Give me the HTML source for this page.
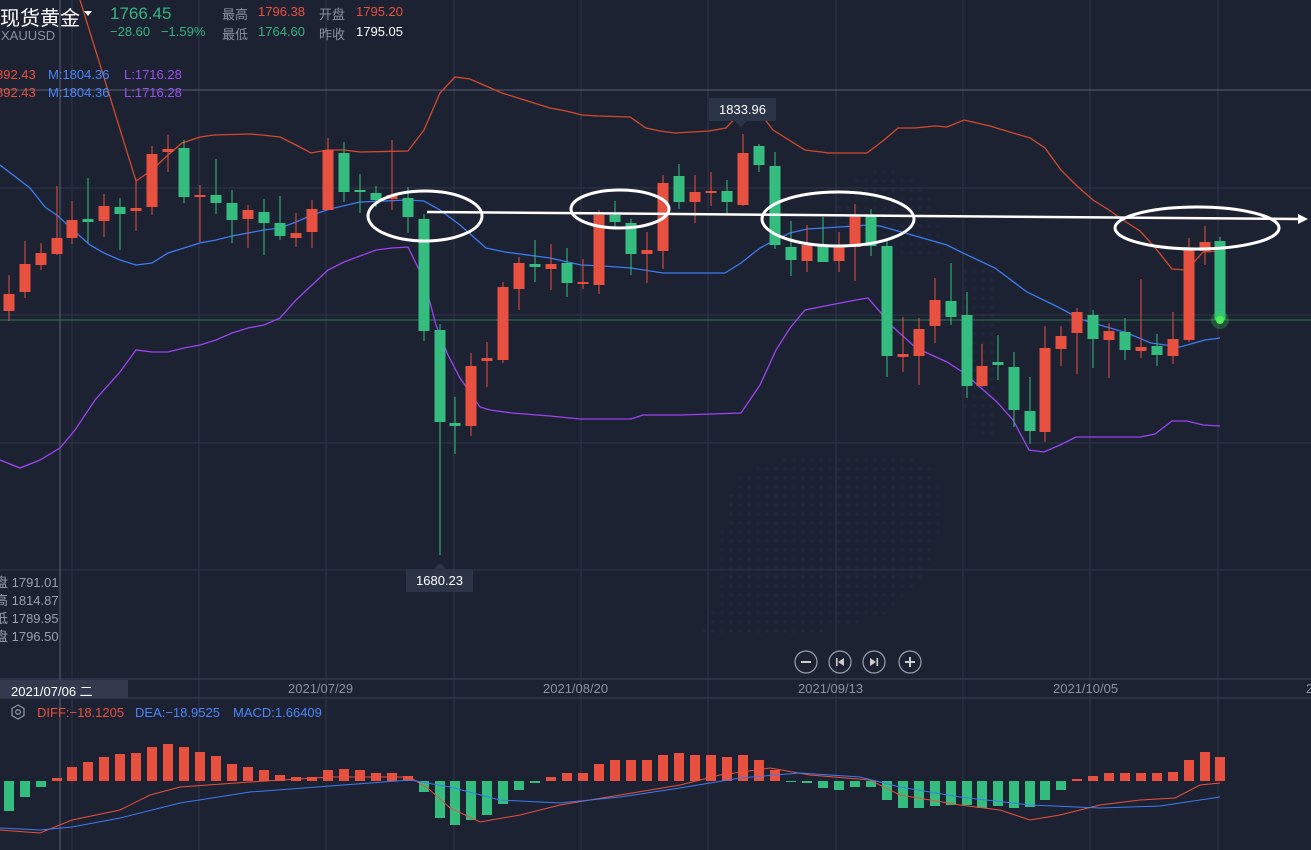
<!DOCTYPE html>
<html><head><meta charset="utf-8"><style>
html,body{margin:0;padding:0;background:#1d2233;width:1311px;height:850px;overflow:hidden;font-family:"Liberation Sans","Noto Sans CJK SC",sans-serif}
svg{position:absolute;left:0;top:0}
.t{position:absolute;white-space:nowrap;font-size:13px}
</style></head><body>
<svg id="s" width="1311" height="850" viewBox="0 0 1311 850"></svg>
<div class="t" style="left:0;top:2px;font-size:20px;color:#fff">现货黄金</div>
<div class="t" style="left:84px;top:11px;width:0;height:0;border-left:4px solid transparent;border-right:4px solid transparent;border-top:5px solid #fff"></div>
<div class="t" style="left:1px;top:28px;color:#8b919e">XAUUSD</div>
<div class="t" style="left:110px;top:4px;font-size:17px;color:#36b37e">1766.45</div>
<div class="t" style="left:110px;top:24px;color:#36b37e">−28.60&nbsp;&nbsp;&nbsp;−1.59%</div>
<div class="t" style="left:222px;top:4px;color:#8b919e">最高</div>
<div class="t" style="left:258px;top:4px;color:#e8503f">1796.38</div>
<div class="t" style="left:319px;top:4px;color:#8b919e">开盘</div>
<div class="t" style="left:356px;top:4px;color:#e8503f">1795.20</div>
<div class="t" style="left:222px;top:24px;color:#8b919e">最低</div>
<div class="t" style="left:258px;top:24px;color:#36b37e">1764.60</div>
<div class="t" style="left:319px;top:24px;color:#8b919e">昨收</div>
<div class="t" style="left:356px;top:24px;color:#fff">1795.05</div>
<div class="t" style="left:-4px;top:67px;color:#e8503f">892.43</div>
<div class="t" style="left:48px;top:67px;color:#4a86f7">M:1804.36</div>
<div class="t" style="left:124px;top:67px;color:#9b4ff2">L:1716.28</div>
<div class="t" style="left:-4px;top:85px;color:#e8503f">892.43</div>
<div class="t" style="left:48px;top:85px;color:#4a86f7">M:1804.36</div>
<div class="t" style="left:124px;top:85px;color:#9b4ff2">L:1716.28</div>
<div class="t" style="left:-5px;top:572px;color:#9aa0ab">盘 1791.01</div>
<div class="t" style="left:-5px;top:590px;color:#9aa0ab">高 1814.87</div>
<div class="t" style="left:-5px;top:608px;color:#9aa0ab">低 1789.95</div>
<div class="t" style="left:-5px;top:626px;color:#9aa0ab">盘 1796.50</div>
<div class="t" style="left:709px;top:98px;width:67px;height:23px;background:#2c3447;color:#fff;text-align:center;line-height:23px">1833.96</div>
<div class="t" style="left:406px;top:569px;width:67px;height:23px;background:#2c3447;color:#fff;text-align:center;line-height:23px">1680.23</div>
<div class="t" style="left:0;top:680px;width:128px;height:18px;background:#333a4e"></div>
<div class="t" style="left:11px;top:681px;color:#fff">2021/07/06 二</div>
<div class="t" style="left:288px;top:681px;color:#8b919e">2021/07/29</div>
<div class="t" style="left:543px;top:681px;color:#8b919e">2021/08/20</div>
<div class="t" style="left:798px;top:681px;color:#8b919e">2021/09/13</div>
<div class="t" style="left:1053px;top:681px;color:#8b919e">2021/10/05</div>
<div class="t" style="left:1306px;top:681px;color:#8b919e">2</div>
<div class="t" style="left:37px;top:705px;color:#e8503f">DIFF:−18.1205</div>
<div class="t" style="left:135px;top:705px;color:#4a86f7">DEA:−18.9525</div>
<div class="t" style="left:233px;top:705px;color:#4a86f7">MACD:1.66409</div>
<script>
var s=document.getElementById('s'),h='';
var R='#e8503f',G='#35bd80';
for(var x=380;x<1000;x+=9)for(var y=100;y<640;y+=9){var v=Math.sin(x*0.013)*Math.cos(y*0.017)+Math.sin((x+y)*0.006);if(v>0.9)h+='<circle cx="'+x+'" cy="'+y+'" r="2" fill="#20263a"/>';}
[188,315,443,570].forEach(function(y){h+='<line x1="0" x2="1311" y1="'+y+'" y2="'+y+'" stroke="#2e3548"/>'});
[72,199,326,454,581,708,836,963,1090,1218].forEach(function(x){h+='<line y1="0" y2="850" x1="'+x+'" x2="'+x+'" stroke="#2e3548"/>'});
h+='<line x1="0" x2="1311" y1="90" y2="90" stroke="#5a6070"/><line y1="0" y2="680" x1="60" x2="60" stroke="#5a6070"/><line y1="698" y2="850" x1="60" x2="60" stroke="#5a6070"/>';
h+='<line x1="0" x2="1311" y1="679" y2="679" stroke="#3a4154"/><line x1="0" x2="1311" y1="698" y2="698" stroke="#3a4154"/>';
h+='<line x1="0" x2="1311" y1="320" y2="320" stroke="#2c7a55"/>';
function pl(p,c,w){h+='<polyline fill="none" stroke="'+c+'" stroke-width="'+(w||1.3)+'" points="'+p.map(function(a){return a.join(',')}).join(' ')+'"/>';}
pl([[80,0],[136,181],[152,170],[168,155],[182,143],[200,137],[214,135],[250,134],[262,135],[280,137],[296,145],[311,153],[327,150],[344,150],[360,152],[408,151],[424,130],[440,93],[455,77],[470,79],[486,86],[502,93],[518,98],[534,103],[550,108],[566,111],[582,115],[598,116],[630,117],[646,128],[660,131],[675,133],[709,131],[726,128],[740,113],[760,113],[773,130],[805,150],[829,153],[867,153],[884,140],[898,128],[915,128],[935,126],[947,127],[964,120],[990,126],[1013,133],[1030,138],[1045,148],[1061,170],[1077,186],[1093,200],[1109,210],[1123,220],[1140,231],[1153,245],[1172,269],[1187,270],[1203,252],[1220,251]],'#d24a2e');
pl([[0,165],[30,188],[45,207],[58,216],[72,229],[90,245],[104,253],[120,260],[136,265],[152,263],[168,253],[184,248],[200,243],[216,240],[232,236],[264,230],[280,228],[296,222],[312,215],[330,209],[360,202],[408,200],[424,201],[440,210],[460,225],[486,248],[505,252],[550,258],[581,265],[603,266],[631,268],[663,273],[725,273],[741,263],[760,248],[775,240],[790,233],[807,229],[840,227],[868,225],[880,226],[905,233],[947,245],[963,253],[995,268],[1027,292],[1060,308],[1080,319],[1100,325],[1127,333],[1151,343],[1180,347],[1205,340],[1220,338]],'#3d7bf0');
pl([[0,460],[20,468],[40,460],[60,448],[75,430],[95,400],[120,372],[136,350],[152,352],[168,352],[184,348],[200,345],[216,340],[232,333],[248,328],[264,325],[280,318],[296,300],[312,285],[328,270],[344,262],[360,256],[376,250],[392,248],[408,247],[424,280],[436,325],[448,355],[460,378],[480,407],[490,410],[512,413],[550,416],[580,419],[631,419],[643,415],[680,415],[741,413],[760,385],[776,350],[790,328],[805,310],[830,305],[856,300],[868,298],[893,327],[916,348],[947,362],[964,373],[997,402],[1013,420],[1029,450],[1044,452],[1060,445],[1076,437],[1140,437],[1155,434],[1172,421],[1187,421],[1203,425],[1220,426]],'#9b45f0');
var C=[[9,'r',294,311,275,321],[25,'r',264,292,241,298],[41,'r',253,265,243,270],[57,'r',238,254,186,255],[72,'r',220,238,201,244],[88,'g',219,222,178,243],[104,'r',206,221,194,237],[120,'g',207,214,198,250],[136,'r',208,211,180,231],[152,'r',154,207,146,215],[168,'r',149,152,135,172],[184,'g',148,197,140,203],[200,'r',195,196,185,242],[216,'g',195,203,159,214],[232,'g',203,220,190,243],[248,'r',210,219,205,248],[264,'g',212,223,199,255],[280,'g',223,236,196,240],[296,'r',233,238,213,247],[312,'r',209,232,200,248],[328,'r',150,210,138,210],[344,'g',153,192,142,202],[360,'g',190,192,174,213],[376,'g',193,200,186,207],[392,'r',195,199,140,210],[408,'g',198,217,187,233],[424,'g',219,331,214,341],[440,'g',330,422,324,555],[455,'g',423,426,397,454],[471,'r',366,426,353,436],[487,'r',358,361,342,387],[503,'r',287,360,282,363],[519,'r',263,289,257,310],[535,'g',264,267,240,282],[551,'r',264,269,244,290],[567,'g',263,283,248,297],[583,'r',282,284,259,289],[599,'r',215,285,210,294],[615,'g',215,222,201,229],[631,'g',223,254,219,275],[647,'r',250,254,232,283],[663,'r',183,251,175,269],[679,'g',176,202,164,209],[695,'r',192,202,175,223],[711,'r',191,193,172,206],[727,'g',191,202,180,214],[743,'r',153,205,134,206],[759,'g',146,165,144,172],[775,'g',166,245,152,249],[791,'g',247,260,221,276],[807,'r',245,261,225,272],[823,'g',245,262,217,262],[839,'r',245,261,232,272],[855,'r',216,247,204,281],[871,'g',216,246,209,256],[887,'g',246,356,240,377],[903,'r',354,357,317,372],[919,'r',329,356,318,385],[935,'r',300,326,278,343],[951,'g',301,317,263,325],[967,'g',315,386,292,398],[982,'r',366,386,344,387],[998,'g',362,365,335,380],[1014,'g',367,410,352,427],[1030,'g',411,431,377,444],[1045,'r',348,432,326,442],[1061,'r',336,349,326,366],[1077,'r',312,333,308,374],[1093,'g',315,339,310,368],[1109,'r',331,340,323,378],[1125,'g',332,350,318,360],[1141,'r',347,351,279,358],[1157,'g',346,355,334,366],[1173,'r',339,356,312,364],[1189,'r',250,340,238,342],[1205,'r',242,251,226,265],[1220,'g',241,320,237,323]];
C.forEach(function(c){var col=c[1]=='r'?R:G;h+='<line x1="'+c[0]+'" x2="'+c[0]+'" y1="'+c[4]+'" y2="'+c[5]+'" stroke="'+col+'"/><rect x="'+(c[0]-5.5)+'" y="'+c[2]+'" width="11" height="'+Math.max(2,c[3]-c[2])+'" fill="'+col+'"/>';});
h+='<circle cx="1220" cy="320" r="9" fill="#3ce04a" opacity="0.25"/><circle cx="1220" cy="320" r="4" fill="#4cf05a"/>';
h+='<path d="M735 121 L741 127 L747 121Z" fill="#2c3447"/><path d="M434 569 L440 563 L446 569Z" fill="#2c3447"/>';
h+='<line x1="427" y1="212" x2="1300" y2="219" stroke="#fff" stroke-width="2.5"/><path d="M1298 214 L1308 219 L1298 224Z" fill="#fff"/>';
[[425,216,57,25],[620,209,49,19],[838,219,76,27],[1197,228,82,21]].forEach(function(e){h+='<ellipse cx="'+e[0]+'" cy="'+e[1]+'" rx="'+e[2]+'" ry="'+e[3]+'" fill="none" stroke="#fff" stroke-width="3"/>';});
[806,840,874,910].forEach(function(x,i){h+='<circle cx="'+x+'" cy="662" r="11" fill="none" stroke="#9aa0ab" stroke-width="1.2"/>';});
h+='<line x1="801" x2="811" y1="662" y2="662" stroke="#ccc" stroke-width="2"/><line x1="905" x2="915" y1="662" y2="662" stroke="#ccc" stroke-width="2"/><line x1="910" x2="910" y1="657" y2="667" stroke="#ccc" stroke-width="2"/>';
h+='<rect x="836" y="658" width="1.6" height="8" fill="#ccc"/><path d="M844 658 L838 662 L844 666Z" fill="#ccc"/><rect x="876.5" y="658" width="1.6" height="8" fill="#ccc"/><path d="M870 658 L876 662 L870 666Z" fill="#ccc"/>';
h+='<path d="M18 705 L24 708.5 L24 715.5 L18 719 L12 715.5 L12 708.5Z" fill="none" stroke="#8b919e" stroke-width="1.3"/><circle cx="18" cy="712" r="2.3" fill="none" stroke="#8b919e" stroke-width="1.3"/>';
var M=[811,797,787,778,767,762,757,754,753,747,744,747,752,756,764,767,770,775,777,777,770,769,770,773,773,776,792,818,825,820,815,804,790,783,777,773,773,764,760,760,760,755,753,755,755,757,755,760,770,782,783,788,790,787,787,800,808,808,806,805,805,808,806,808,807,800,790,779,776,773,773,773,773,772,760,752,757];
M.forEach(function(v,i){var x=C[i][0];var t=Math.min(v,781),b=Math.max(v,781);h+='<rect x="'+(x-5)+'" y="'+t+'" width="10" height="'+(b-t)+'" fill="'+(v<781?R:G)+'"/>';});
pl([[0,830],[40,833],[72,820],[120,810],[150,795],[180,787],[250,782],[330,777],[410,777],[430,790],[450,808],[480,822],[520,815],[560,805],[620,795],[680,785],[720,775],[770,768],[810,775],[870,780],[900,795],[960,805],[1000,810],[1030,820],[1060,815],[1100,805],[1140,800],[1175,798],[1200,785],[1220,783]],'#e8503f',1);
pl([[0,828],[40,830],[72,827],[120,818],[180,803],[250,792],[330,786],[410,780],[450,787],[500,800],[560,803],[620,797],[680,788],[740,778],[800,773],[860,777],[900,787],[960,797],[1030,805],[1100,808],[1160,806],[1200,800],[1220,797]],'#3d7bf0',1);
s.innerHTML=h;
</script>
</body></html>
